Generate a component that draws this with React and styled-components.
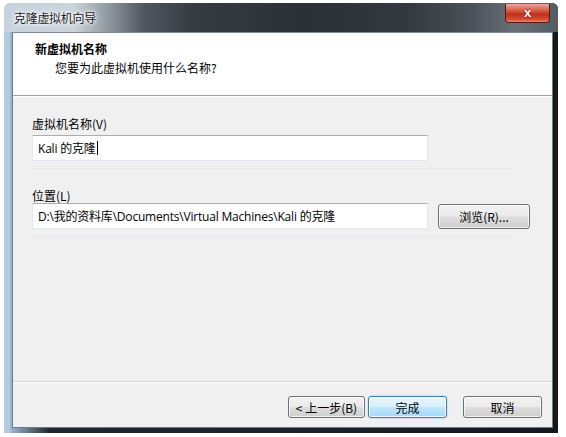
import React from "react";
import styled, { createGlobalStyle, css } from "styled-components";

const Global = createGlobalStyle`
  html, body { margin: 0; padding: 0; background: #ffffff; }
  body { font-family: "Noto Sans CJK SC", "Liberation Sans", sans-serif; font-size: 12px; color: #000; }
`;

const Frame = styled.div`
  margin: 3px 0 0 4px;
  width: 554px;
  height: 430px;
  box-sizing: border-box;
  display: flex;
  flex-direction: column;
  padding: 0 5px 5px 2px;
  border-radius: 6px 6px 0 0;
  background: linear-gradient(90deg, #9fb9d1 0px, #22262a 40px, #1e2125 300px, #15171a 554px);
  border-left: 6px solid #b3cbe1;
`;

const TitleBar = styled.div`
  height: 29px;
  display: flex;
  align-items: center;
  justify-content: space-between;
  margin: 0 -5px 0 -8px;
  padding: 0 5px 0 8px;
  border-radius: 6px 6px 0 0;
  background: linear-gradient(90deg, #c6d3df 0px, #cbd3db 70px, #8e969e 105px, #50575f 140px, #363b42 190px, #2c3136 300px, #33383e 400px, #4a5057 465px, #696f76 510px, #555b62 554px);
`;

const TitleText = styled.span`
  padding-left: 2px;
  font-size: 12px;
  color: #1a1a1a;
  text-shadow: 0 0 6px #ffffff, 0 0 4px #ffffff, 0 0 2px #ffffff;
  letter-spacing: -0.3px;
`;

const CloseButton = styled.div`
  width: 43px;
  height: 18px;
  margin-top: -9px;
  margin-right: 3px;
  border: 1px solid #5a1a14;
  border-top: none;
  border-radius: 0 0 4px 4px;
  background: linear-gradient(180deg, #e9a99a 0%, #d3553f 40%, #c0301c 55%, #d74a33 85%, #e98a6e 100%);
  display: flex;
  align-items: center;
  justify-content: center;
  color: #fff;
  font-family: "Liberation Sans", sans-serif;
  font-weight: bold;
  font-size: 13px;
  text-shadow: 0 0 2px #600;
`;

const Client = styled.div`
  flex: 1;
  background: #f0f0f0;
  display: flex;
  flex-direction: column;
  border: 1px solid #6d7b8a;
  border-top-color: #7f8c99;
`;

const Header = styled.div`
  height: 63px;
  background: #ffffff;
  border-bottom: 1px solid #a0a0a0;
  box-shadow: 0 1px 0 #ffffff;
  padding: 7px 0 0 22px;
  box-sizing: border-box;
`;

const HeaderTitle = styled.div`
  font-weight: bold;
  font-size: 12px;
  line-height: 18px;
`;

const HeaderSub = styled.div`
  padding-left: 20px;
  font-size: 12px;
  line-height: 18px;
  margin-top: 1px;
`;

const Body = styled.div`
  flex: 1;
  padding: 19px 0 0 19px;
  display: flex;
  flex-direction: column;
`;

const FieldGroup = styled.div`
  display: flex;
  flex-direction: column;
  width: 480px;
  ${(p) => p.$divider && css`
    padding-bottom: 7px;
    border-bottom: 1px solid #e6e6e6;
  `}
  margin-bottom: ${(p) => p.$gap || 0}px;
`;

const Label = styled.div`
  font-size: 12px;
  line-height: 18px;
  height: 18px;
  margin-bottom: ${(p) => (p.$tight ? -2 : 2)}px;
`;

const Row = styled.div`
  display: flex;
  align-items: center;
  gap: 10px;
`;

const TextBox = styled.div`
  flex-shrink: 0;
  width: 396px;
  height: 26px;
  box-sizing: border-box;
  background: #fff;
  border: 1px solid #e3e9ef;
  border-top-color: #abadb3;
  padding-left: 5px;
  display: flex;
  align-items: center;
  font-family: "Open Sans", "Noto Sans CJK SC", sans-serif;
  font-size: 12px;
  letter-spacing: -0.2px;
  white-space: nowrap;
`;

const Caret = styled.span`
  display: inline-block;
  width: 1px;
  height: 14px;
  background: #000;
  margin-left: 1px;
`;

const buttonBase = css`
  box-sizing: border-box;
  flex-shrink: 0;
  height: 22px;
  border: 1px solid #707070;
  border-radius: 3px;
  background: linear-gradient(180deg, #f2f2f2 0%, #ebebeb 48%, #dddddd 52%, #cfcfcf 100%);
  box-shadow: inset 0 0 0 1px rgba(255, 255, 255, 0.7);
  display: flex;
  align-items: center;
  justify-content: center;
  font-size: 12px;
  font-family: "Noto Sans CJK SC", "Liberation Sans", sans-serif;
  color: #000;
`;

const Button = styled.div`
  ${buttonBase}
  width: ${(p) => p.$w}px;
  ${(p) => p.$default && css`
    border-color: #3c7fb1;
    background: linear-gradient(180deg, #eaf6fd 0%, #d9f0fc 48%, #bee6fd 52%, #a7d9f5 100%);
    box-shadow: inset 0 0 0 1px rgba(255, 255, 255, 0.8), 0 0 2px #8fc6ec;
  `}
`;

const BrowseButton = styled(Button)`
  height: 25px;
  margin-top: 1px;
`;

const Footer = styled.div`
  height: 46px;
  border-top: 1px solid #d5d5d5;
  box-shadow: inset 0 1px 0 #ffffff;
  display: flex;
  justify-content: flex-end;
  align-items: flex-start;
  padding: 14px 10px 0 0;
  gap: 3px;
  box-sizing: border-box;
`;

const Spacer = styled.div`
  width: ${(p) => p.$w}px;
`;

export default function App() {
  return (
    <>
      <Global />
      <Frame>
        <TitleBar>
          <TitleText>克隆虚拟机向导</TitleText>
          <CloseButton>x</CloseButton>
        </TitleBar>
        <Client>
          <Header>
            <HeaderTitle>新虚拟机名称</HeaderTitle>
            <HeaderSub>您要为此虚拟机使用什么名称?</HeaderSub>
          </Header>
          <Body>
            <FieldGroup $divider $gap={18}>
              <Label>虚拟机名称(V)</Label>
              <TextBox>
                Kali 的克隆<Caret />
              </TextBox>
            </FieldGroup>
            <FieldGroup $divider>
              <Label $tight>位置(L)</Label>
              <Row>
                <TextBox>D:\我的资料库\Documents\Virtual Machines\Kali 的克隆</TextBox>
                <BrowseButton $w={92}>浏览(R)...</BrowseButton>
              </Row>
            </FieldGroup>
          </Body>
          <Footer>
            <Button $w={77}>&lt; 上一步(B)</Button>
            <Button $w={79} $default>完成</Button>
            <Spacer $w={10} />
            <Button $w={79}>取消</Button>
          </Footer>
        </Client>
      </Frame>
    </>
  );
}
